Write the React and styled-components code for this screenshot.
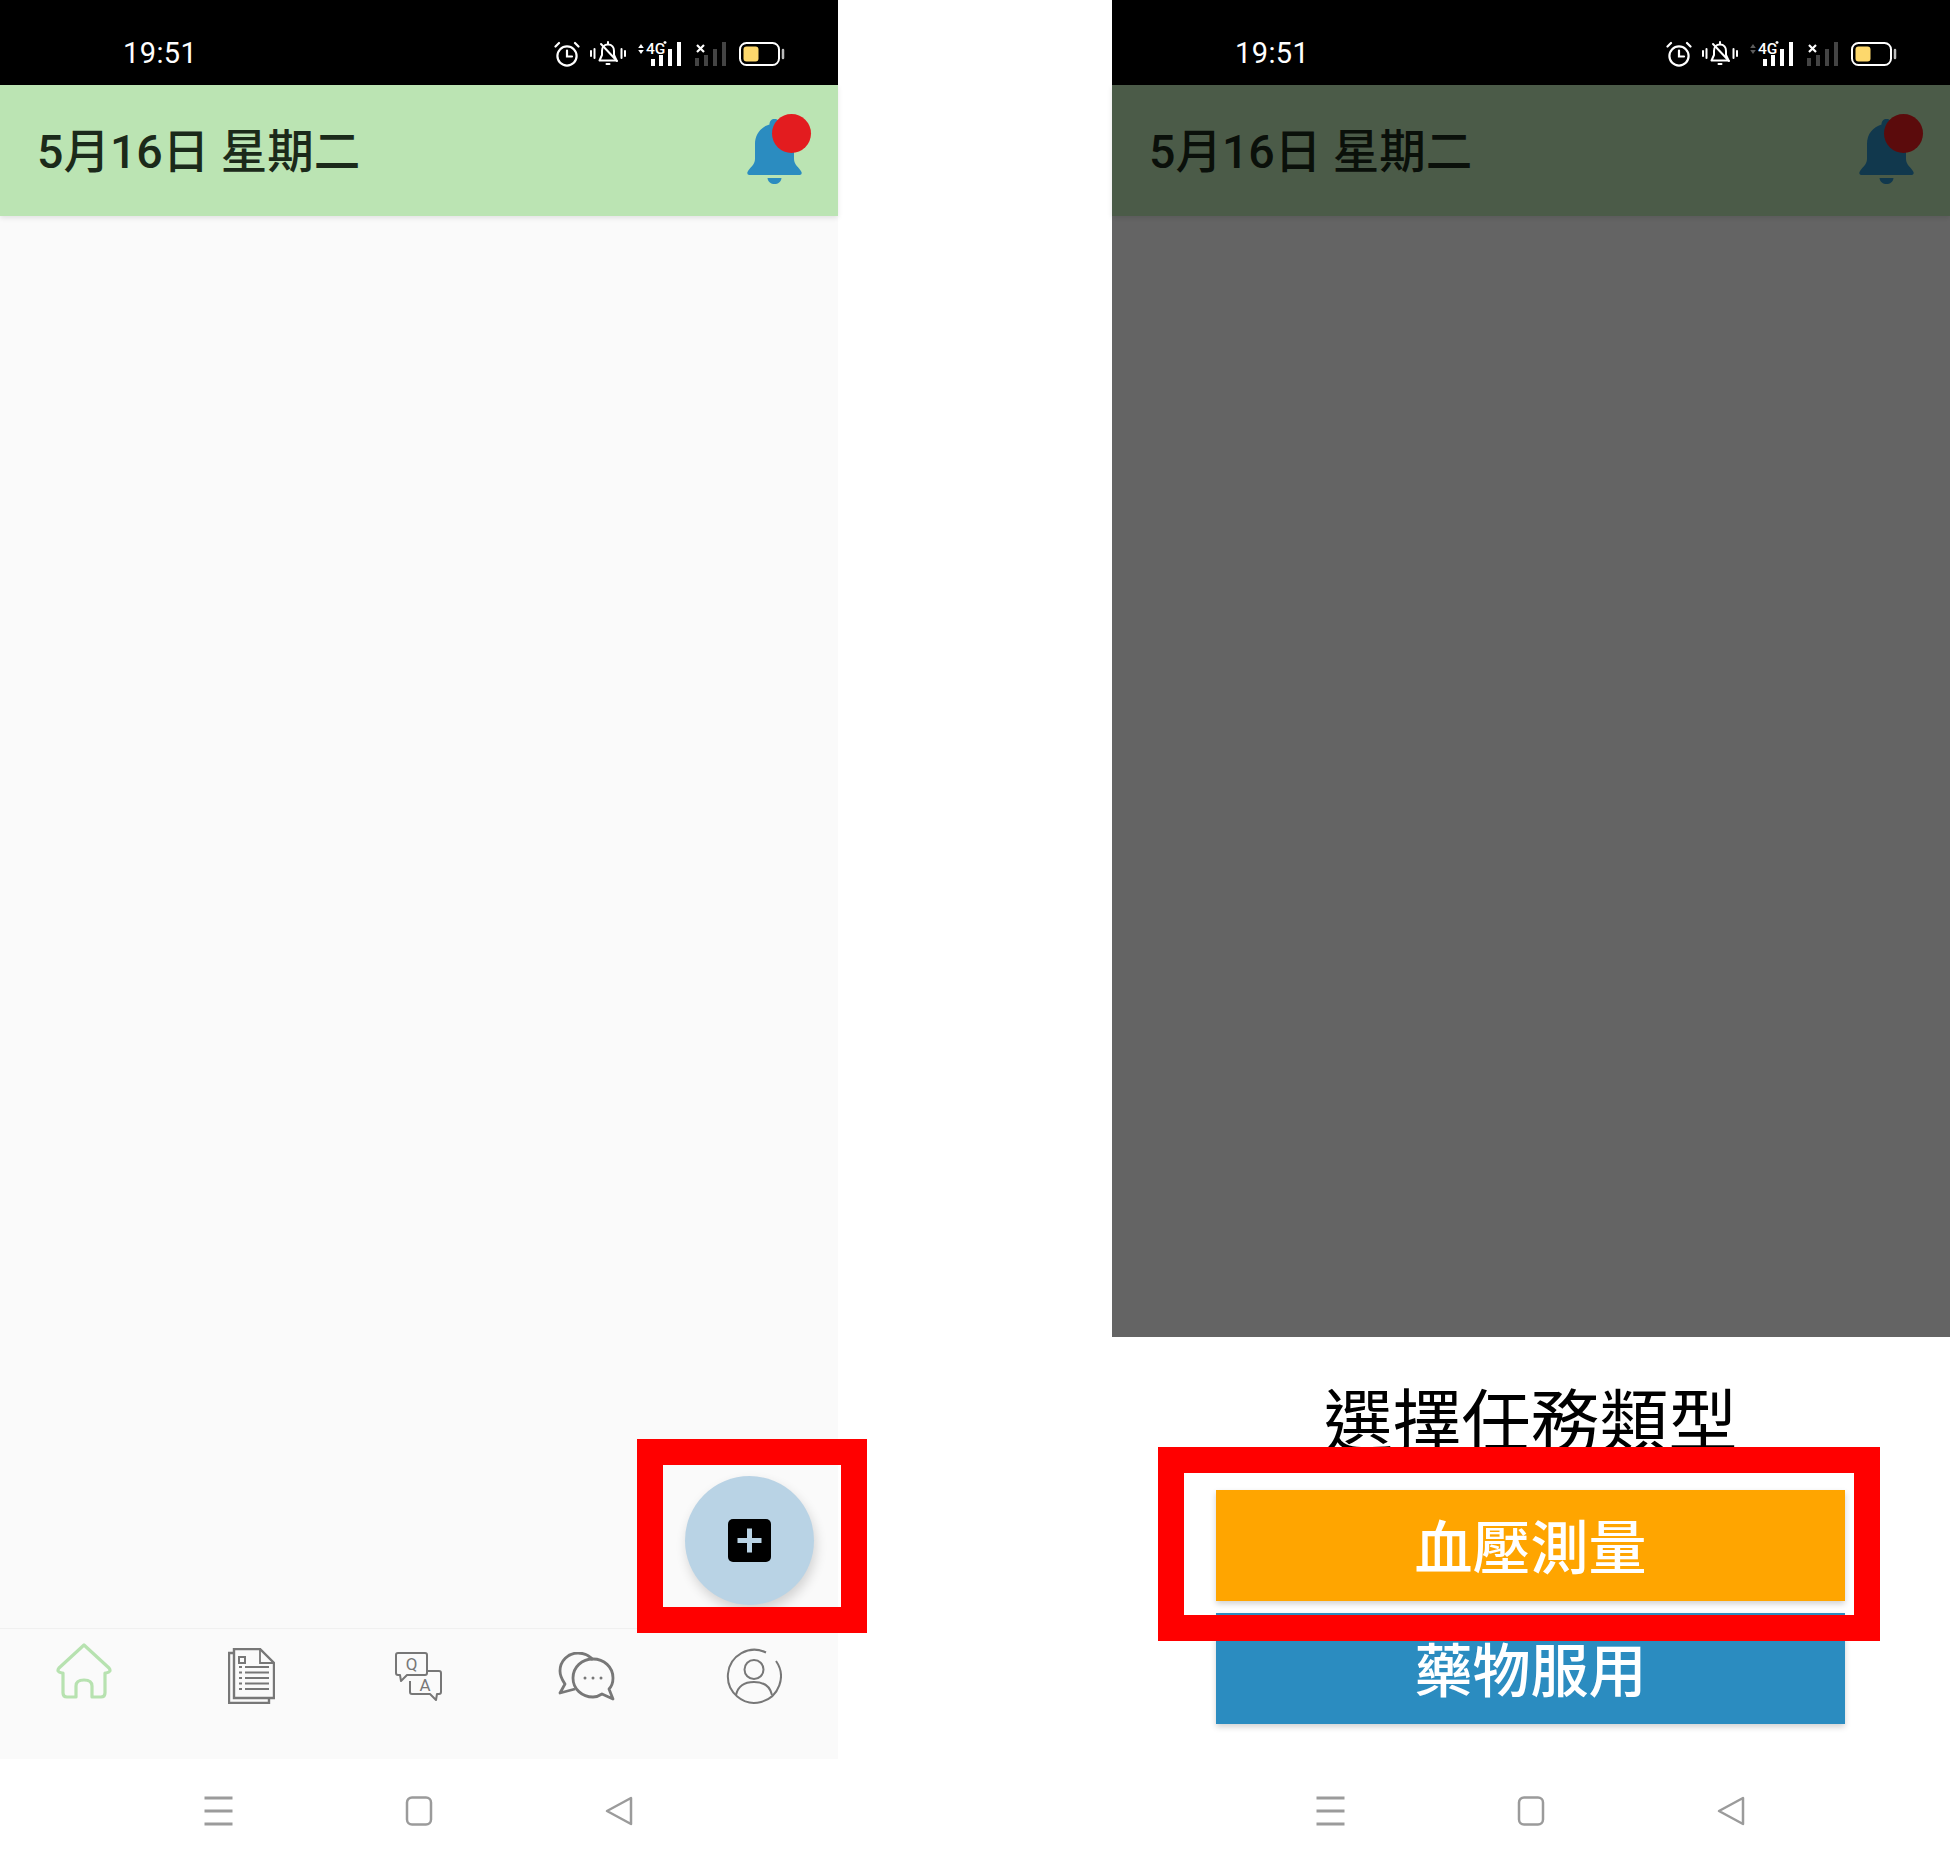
import React from "react";
import styled, { createGlobalStyle } from "styled-components";

const Global = createGlobalStyle`
  html, body { margin: 0; padding: 0; background: #fff; }
  #root { width: 1950px; height: 1862px; overflow: hidden; }
`;

const Page = styled.div`
  width: 1950px;
  height: 1862px;
  display: flex;
  justify-content: space-between;
  background: #fff;
  font-family: Roboto, "Noto Sans CJK TC", sans-serif;
`;

const Phone = styled.section`
  position: relative;
  width: 838px;
  height: 1862px;
  display: flex;
  flex-direction: column;
  background: #fff;
`;

const StatusBarRoot = styled.div`
  height: 85px;
  flex: none;
  background: #000;
  color: #fff;
  display: flex;
  align-items: center;
  justify-content: space-between;
  padding: 22px 53px 0 123px;
  box-sizing: border-box;
`;

const Clock = styled.span`
  font-size: 29px;
  letter-spacing: 0.4px;
  line-height: 1;
`;

const StatusIcons = styled.div`
  display: flex;
  align-items: center;
`;

const StatusGlyph = styled.svg`
  display: block;
  flex: none;
  margin-left: ${(p) => p.$gap || 0}px;
`;

const DateBar = styled.header`
  position: relative;
  z-index: 1;
  height: 131px;
  flex: none;
  background: #bbe4b3;
  display: flex;
  align-items: center;
  justify-content: space-between;
  padding: 0 36px 0 37px;
  box-sizing: border-box;
  box-shadow: 0 2px 5px rgba(0, 0, 0, 0.1);
`;

const DateText = styled.h1`
  margin: 4px 0 0;
  font-size: 46.5px;
  font-weight: 500;
  line-height: 1;
  color: #1b2a1a;
  white-space: nowrap;
`;

const BellWrap = styled.div`
  position: relative;
  width: 55px;
  height: 65px;
  margin-top: 1px;
`;

const BellBadge = styled.span`
  position: absolute;
  left: 25px;
  top: -5px;
  width: 39px;
  height: 39px;
  border-radius: 50%;
  background: #e31c1f;
`;

const Content = styled.main`
  position: relative;
  flex: 1;
  background: #fafafa;
`;

const Fab = styled.button`
  position: absolute;
  right: 24px;
  bottom: 23px;
  width: 129px;
  height: 129px;
  border: 0;
  padding: 0;
  border-radius: 50%;
  background: #b9d3e5;
  display: flex;
  align-items: center;
  justify-content: center;
  box-shadow: 2px 6px 12px rgba(0, 0, 0, 0.16);
`;

const TabBar = styled.nav`
  height: 131px;
  flex: none;
  background: #fafafa;
  border-top: 1px solid #f0f0f0;
  box-sizing: border-box;
  display: grid;
  grid-template-columns: repeat(5, 1fr);
`;

const Tab = styled.div`
  display: flex;
  justify-content: center;
  align-items: flex-start;
  padding-top: ${(p) => p.$top}px;
`;

const SystemNav = styled.div`
  height: 103px;
  flex: none;
  background: #fff;
  display: flex;
  align-items: center;
  justify-content: center;
  gap: 171px;
  box-sizing: border-box;
`;

const DimStage = styled.div`
  position: relative;
  flex: 1;
  display: flex;
  flex-direction: column;
  &::after {
    content: "";
    position: absolute;
    inset: 0;
    z-index: 2;
    background: rgba(0, 0, 0, 0.6);
  }
`;

const Sheet = styled.div`
  height: 422px;
  flex: none;
  background: #fff;
  display: flex;
  flex-direction: column;
  align-items: stretch;
  padding: 43px 105px 0 104px;
  box-sizing: border-box;
`;

const SheetTitle = styled.h2`
  margin: 0 0 20px;
  height: 90px;
  font-size: 69px;
  line-height: 88px;
  font-weight: 400;
  text-align: center;
  color: #000;
  white-space: nowrap;
`;

const TaskButton = styled.button`
  height: ${(p) => p.$h}px;
  margin-bottom: 12px;
  border: 0;
  padding: 6px 0 0;
  background: ${(p) => p.$bg};
  color: #fff;
  font-family: inherit;
  font-size: 58px;
  font-weight: 500;
  line-height: 1;
  box-shadow: 0 3px 6px rgba(0, 0, 0, 0.18);
`;

const Highlight = styled.div`
  position: absolute;
  z-index: 5;
  left: ${(p) => p.$x}px;
  top: ${(p) => p.$y}px;
  width: ${(p) => p.$w}px;
  height: 194px;
  border: 26px solid #ff0000;
  box-sizing: border-box;
`;

const Alarm = () => (
  <StatusGlyph width="26" height="26" viewBox="0 0 26 26" fill="none" stroke="#fff" strokeWidth="2.2" strokeLinecap="round">
    <circle cx="13" cy="15" r="9.6" />
    <path d="M13 9.5V15.5H18M1.5 5.5 5 2M24.5 5.5 21 2" />
  </StatusGlyph>
);

const MuteBell = () => (
  <StatusGlyph $gap={10} width="36" height="26" viewBox="0 0 36 26" fill="none" stroke="#fff" strokeWidth="2" strokeLinecap="round" strokeLinejoin="round">
    <path d="M18 3.5C14 3.5 12 6.5 12 10V14L9.5 19.5H26.5L24 14V10C24 6.5 22 3.5 18 3.5Z" />
    <path d="M11 3 27 20M18 1V3M16.5 23H19.5" />
    <path d="M1 10V15M4.5 8V17M31.500 8V17M35 10V15" />
  </StatusGlyph>
);

const Signal4G = ({ active }) => (
  <StatusGlyph $gap={12} width="44" height="26" viewBox="0 0 44 26" fill="#fff">
    <path d="M3 3 5.800 7H.2ZM3 13 .2 9H5.800Z" fill={active ? "#fff" : "#5c5c5c"} />
    <text x="8" y="13" fontFamily="Roboto, sans-serif" fontSize="15.500" fontWeight="500" fill="#fff">4G</text>
    <path d="M27 3V0M25.500 1.500H28.500" stroke="#fff" strokeWidth="1.300" />
    <rect x="13" y="18" width="4" height="7" />
    <rect x="21" y="14" width="4" height="11" />
    <rect x="30" y="8" width="4" height="17" />
    <rect x="39" y="1" width="4" height="24" />
  </StatusGlyph>
);

const SignalOff = () => (
  <StatusGlyph $gap={13} width="31" height="26" viewBox="0 0 31 26" fill="#444">
    <path d="M2 4 9 11M9 4 2 11" stroke="#fff" strokeWidth="2.200" />
    <rect x="0" y="17" width="4" height="8" />
    <rect x="9" y="14" width="4" height="11" />
    <rect x="18" y="8" width="4" height="17" />
    <rect x="27" y="1" width="4" height="24" />
  </StatusGlyph>
);

const Battery = () => (
  <StatusGlyph $gap={13} width="46" height="24" viewBox="0 0 46 24" fill="none">
    <rect x="1" y="1" width="39" height="22" rx="6.500" stroke="#fff" strokeWidth="2" />
    <rect x="4.500" y="4.500" width="15" height="15" rx="3" fill="#fdd86c" />
    <path d="M44 8V16" stroke="#bbb" strokeWidth="2.500" strokeLinecap="round" />
  </StatusGlyph>
);

const StatusBar = ({ active }) => (
  <StatusBarRoot>
    <Clock>19:51</Clock>
    <StatusIcons>
      <Alarm />
      <MuteBell />
      <Signal4G active={active} />
      <SignalOff />
      <Battery />
    </StatusIcons>
  </StatusBarRoot>
);

const BellIcon = () => (
  <svg width="55" height="65" viewBox="0 0 55 65" fill="#2b8cc0">
    <path d="M27.500 0C24.500 0 22.500 2 22.500 5.500C14 8 8 15 8 25V40C8 46 3 48 .5 53C0 54.500 .5 56 2.500 56H52.500C54.500 56 55 54.500 54.500 53C52 48 47 46 47 40V25C47 15 41 8 32.500 5.500C32.500 2 30.500 0 27.500 0Z" />
    <path d="M20.500 59H34.500C34 63 31 65 27.500 65C24 65 21 63 20.500 59Z" />
  </svg>
);

const DateHeader = () => (
  <DateBar>
    <DateText>5月16日 星期二</DateText>
    <BellWrap>
      <BellIcon />
      <BellBadge />
    </BellWrap>
  </DateBar>
);

const HomeIcon = () => (
  <svg width="56" height="56" viewBox="0 0 56 56" fill="none" stroke="#b7e2b0" strokeWidth="3.200" strokeLinejoin="round">
    <path d="M28 2 53 25Q56 29 50 30H49V50Q49 54 45 54H36V43Q36 37 28 37Q20 37 20 43V54H11Q7 54 7 50V30H6Q0 29 3 25Z" />
  </svg>
);

const DocIcon = () => (
  <svg width="47" height="56" viewBox="0 0 47 56" fill="none" stroke="#777" strokeWidth="2">
    <path d="M6 5H1V55H41V50" strokeWidth="2.400" />
    <path d="M6 1H32L46 15V50H6Z" strokeWidth="2.400" />
    <path d="M32 1V15H46" strokeWidth="1.800" />
    <rect x="11" y="9" width="6" height="6" />
    <path d="M11 19H14M17 19H41M11 24.500H14M17 24.500H41M11 30H14M17 30H41M11 35.500H14M17 35.500H41M11 41H14M17 41H41" strokeWidth="2" />
  </svg>
);

const QaIcon = () => (
  <svg width="47" height="49" viewBox="0 0 47 49" fill="none" stroke="#777" strokeWidth="2" strokeLinejoin="round">
    <path d="M32 19H44Q46 19 46 21V40Q46 42 44 42H42L41 48 35 42H17Q15 42 15 40V29" />
    <path d="M3 1H30Q32 1 32 3V21Q32 23 30 23H12L6 29 5 23H3Q1 23 1 21V3Q1 1 3 1Z" />
    <text x="16.500" y="18" textAnchor="middle" fontFamily="Roboto, sans-serif" fontSize="17" fill="#777" stroke="none">Q</text>
    <text x="30" y="38.500" textAnchor="middle" fontFamily="Roboto, sans-serif" fontSize="17" fill="#777" stroke="none">A</text>
  </svg>
);

const ChatIcon = () => (
  <svg width="57" height="49" viewBox="0 0 57 49" fill="none" stroke="#777" strokeWidth="2.800" strokeLinejoin="round">
    <path d="M35 8C31 3 26 1 20 1C10 1 2 9 2 19C2 25 5 29 7 32L2 41 17 37" />
    <path d="M35 7C46 7 55 15 55 26C55 31 53 35 51 37L55 47 44 42C41 44 38 45 35 45C24 45 15 37 15 26C15 15 24 7 35 7Z" />
    <circle cx="27" cy="26" r="1.500" fill="#777" stroke="none" />
    <circle cx="35" cy="26" r="1.500" fill="#777" stroke="none" />
    <circle cx="43" cy="26" r="1.500" fill="#777" stroke="none" />
  </svg>
);

const ProfileIcon = () => (
  <svg width="56" height="56" viewBox="0 0 56 56" fill="none" stroke="#777" strokeWidth="2">
    <path d="M40 4.500A26.500 26.500 0 1 0 50 13" />
    <circle cx="28" cy="21.500" r="9.500" />
    <path d="M10 47C12 38 19 34 28 34C37 34 44 38 46 47" />
  </svg>
);

const MenuGlyph = () => (
  <svg width="30" height="30" viewBox="0 0 30 30" fill="none" stroke="#9b9b9b" strokeWidth="3">
    <path d="M1.500 2H29.500M1.500 15H29.500M1.500 28H29.500" />
  </svg>
);

const SquareGlyph = () => (
  <svg width="30" height="30" viewBox="0 0 30 30" fill="none" stroke="#9b9b9b" strokeWidth="2.500">
    <rect x="3" y="1.500" width="24" height="27" rx="5" />
  </svg>
);

const BackGlyph = () => (
  <svg width="30" height="30" viewBox="0 0 30 30" fill="none" stroke="#9b9b9b" strokeWidth="2.500" strokeLinejoin="round">
    <path d="M26 2V28L2 15Z" />
  </svg>
);

const SystemButtons = () => (
  <SystemNav>
    <MenuGlyph />
    <SquareGlyph />
    <BackGlyph />
  </SystemNav>
);

const PlusIcon = () => (
  <svg width="43" height="43" viewBox="0 0 43 43">
    <rect width="43" height="43" rx="5" fill="#000" />
    <path d="M21.500 9.500V33.500M9.500 21.500H33.500" stroke="#b9d3e5" strokeWidth="5" />
  </svg>
);

export default function App() {
  return (
    <Page>
      <Global />
      <Phone>
        <StatusBar active />
        <DateHeader />
        <Content>
          <Fab aria-label="新增">
            <PlusIcon />
          </Fab>
        </Content>
        <TabBar>
          <Tab $top={14}><HomeIcon /></Tab>
          <Tab $top={19}><DocIcon /></Tab>
          <Tab $top={23}><QaIcon /></Tab>
          <Tab $top={23}><ChatIcon /></Tab>
          <Tab $top={19}><ProfileIcon /></Tab>
        </TabBar>
        <SystemButtons />
        <Highlight $x={637} $y={1439} $w={230} />
      </Phone>
      <Phone>
        <StatusBar />
        <DimStage>
          <DateHeader />
          <Content />
        </DimStage>
        <Sheet>
          <SheetTitle>選擇任務類型</SheetTitle>
          <TaskButton $h={111} $bg="#ffa500">血壓測量</TaskButton>
          <TaskButton $h={111} $bg="#2b8cc0">藥物服用</TaskButton>
        </Sheet>
        <SystemButtons />
        <Highlight $x={46} $y={1447} $w={722} />
      </Phone>
    </Page>
  );
}
